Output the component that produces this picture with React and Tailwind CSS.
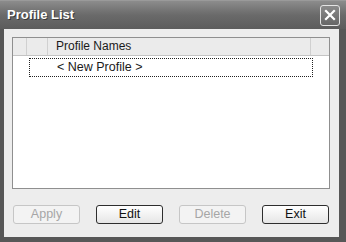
import React from 'react';

const buttons = [
  { label: 'Apply', disabled: true },
  { label: 'Edit', disabled: false },
  { label: 'Delete', disabled: true },
  { label: 'Exit', disabled: false },
];

export default function App() {
  return (
    <div
      className="w-[346px] h-[242px] flex flex-col bg-[#575757] overflow-hidden"
      style={{ fontFamily: '"Liberation Sans", Arial, sans-serif' }}
    >
      {/* Title bar */}
      <div className="h-[29px] shrink-0 flex items-center justify-between pl-[7px] pr-[6px] bg-gradient-to-b from-[#8c8c8c] via-[#6a6a6a] to-[#5c5c5c] border-t border-[#9a9a9a]">
        <span className="text-white font-bold text-[13px] [text-shadow:1px_1px_0_#3a3a3a]">
          Profile List
        </span>
        <div className="w-[20px] h-[21px] rounded-[3px] border border-[#e4e4e4] bg-gradient-to-b from-[#8a8a8a] to-[#666666] flex items-center justify-center">
          <svg width="12" height="12" viewBox="0 0 12 12">
            <path d="M2 2L10 10M10 2L2 10" stroke="#ffffff" strokeWidth="2.2" strokeLinecap="square" />
          </svg>
        </div>
      </div>

      {/* Body */}
      <div className="flex-1 ml-[4px] mr-[7px] mb-[5px] bg-[#ededed] flex flex-col pt-[8px] pl-[8px] pr-[9px]">
        {/* List */}
        <div className="h-[152px] bg-white border border-[#8f8f8f] flex flex-col">
          <div className="h-[18px] flex bg-[#ebebeb] border-b border-[#c4c4c4] text-[12px] text-[#1a1a1a]">
            <div className="w-[14px] border-r border-[#d0d0d0]" />
            <div className="w-[21px] border-r border-[#d0d0d0]" />
            <div className="w-[263px] border-r border-[#d0d0d0] pl-[8px] leading-[17px]">
              Profile Names
            </div>
            <div className="flex-1" />
          </div>
          <div className="mt-[2px] ml-[16px] w-[284px] h-[19px] border border-dotted border-[#222222] text-[12.5px] text-[#1a1a1a] pl-[27px] leading-[17px]">
            &lt; New Profile &gt;
          </div>
        </div>

        {/* Buttons */}
        <div className="mt-[16px] flex gap-[16px] pl-[1px]">
          {buttons.map((b) => (
            <div
              key={b.label}
              className={`w-[67px] h-[19px] rounded-[3px] flex items-center justify-center text-[12.5px] ${
                b.disabled
                  ? 'border border-[#c6c6c6] bg-[#f3f3f3] text-[#a6a6a6]'
                  : 'border border-[#2e2e2e] bg-gradient-to-b from-[#ffffff] to-[#e6e6e6] text-[#111111]'
              }`}
            >
              {b.label}
            </div>
          ))}
        </div>
      </div>
    </div>
  );
}
